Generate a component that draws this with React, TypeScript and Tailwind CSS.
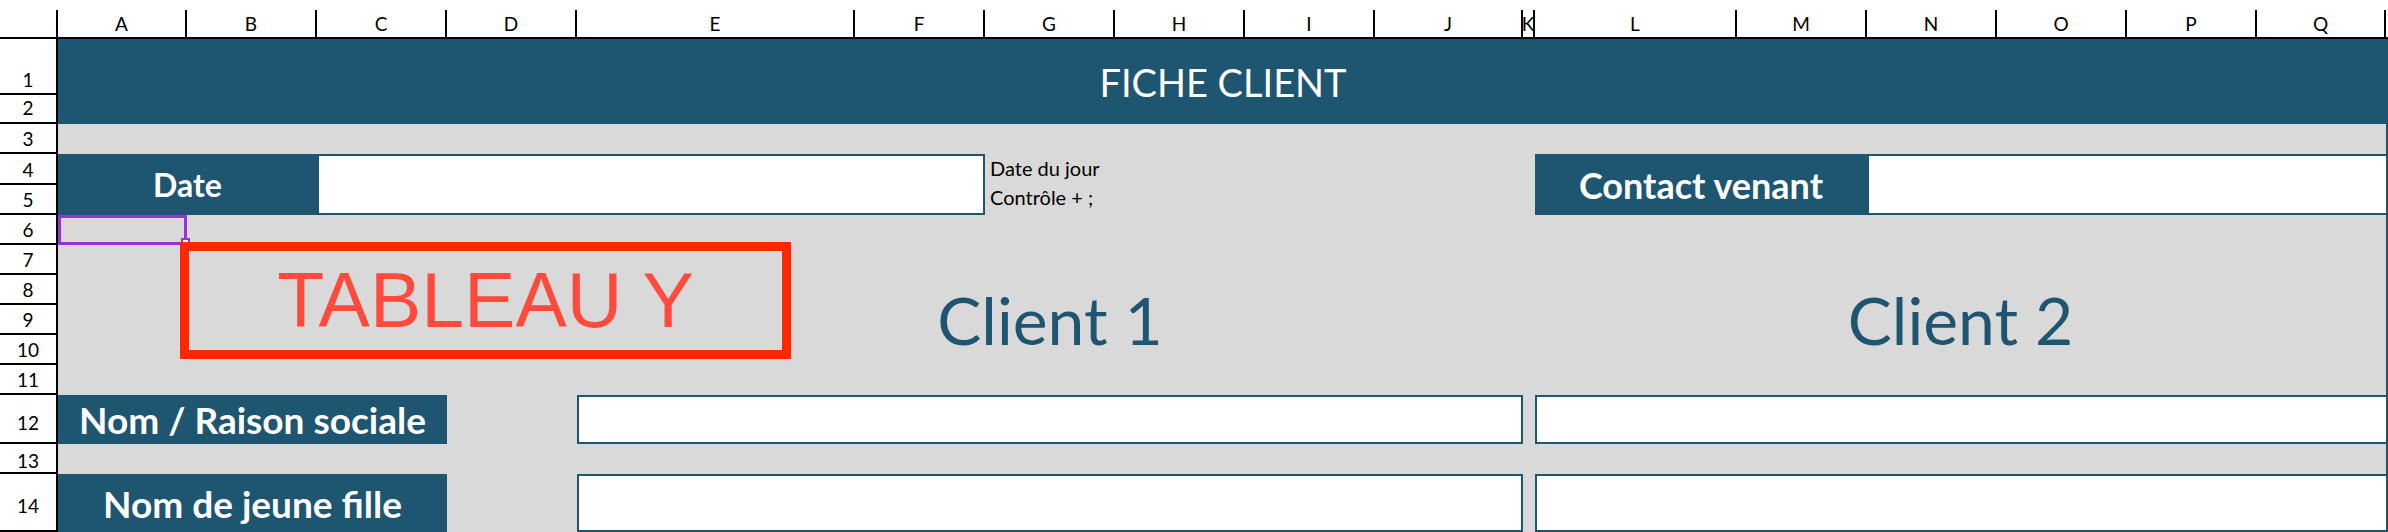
const colHeaders: [string, string][] = [
  ['A', 'col-[2/3]'],
  ['B', 'col-[3/4]'],
  ['C', 'col-[4/5]'],
  ['D', 'col-[5/6]'],
  ['E', 'col-[6/7]'],
  ['F', 'col-[7/8]'],
  ['G', 'col-[8/9]'],
  ['H', 'col-[9/10]'],
  ['I', 'col-[10/11]'],
  ['J', 'col-[11/12]'],
  ['K', 'col-[12/13]'],
  ['L', 'col-[13/14]'],
  ['M', 'col-[14/15]'],
  ['N', 'col-[15/16]'],
  ['O', 'col-[16/17]'],
  ['P', 'col-[17/18]'],
  ['Q', 'col-[18/19]'],
];

const rowLabels: [string, string, string][] = [
  ['1', 'row-[2/3]', 'pb-[4px]'],
  ['2', 'row-[3/4]', 'pb-[5px]'],
  ['3', 'row-[4/5]', 'pb-[4px]'],
  ['4', 'row-[5/6]', 'pb-[4px]'],
  ['5', 'row-[6/7]', 'pb-[4px]'],
  ['6', 'row-[7/8]', 'pb-[4px]'],
  ['7', 'row-[8/9]', 'pb-[4px]'],
  ['8', 'row-[9/10]', 'pb-[4px]'],
  ['9', 'row-[10/11]', 'pb-[4px]'],
  ['10', 'row-[11/12]', 'pb-[4px]'],
  ['11', 'row-[12/13]', 'pb-[4px]'],
  ['12', 'row-[13/14]', 'pb-[10px]'],
  ['13', 'row-[14/15]', 'pb-[2px]'],
  ['14', 'row-[15/16]', 'pb-[15px]'],
];

export default function App() {
  return (
    <div className="w-[2388px] h-[532px] overflow-hidden bg-white font-['Lato',sans-serif]">
      <div className="relative grid grid-cols-[58px_129px_130px_130px_130px_278px_130px_130px_130px_130px_148px_12px_202px_130px_130px_130px_130px_129px_2px] grid-rows-[39px_56px_29px_30px_31px_30px_30px_30px_30px_30px_30px_30px_49px_30px_58px]">
        {/* column header */}
        <div className="col-[1/2] row-[1/2] bg-white pt-[10px] border-b-2 border-black">
          <div className="h-full border-r-2 border-black" />
        </div>
        {colHeaders.map(([l, c]) => (
          <div key={l} className={`${c} row-[1/2] bg-white pt-[10px] border-b-2 border-black`}>
            <div className="h-full border-r-2 border-black flex items-end justify-center pb-[4px] text-[19px] leading-none text-black overflow-hidden">
              {l}
            </div>
          </div>
        ))}
        <div className="col-[19/20] row-[1/2] bg-white border-b-2 border-black" />

        {/* row header */}
        {rowLabels.map(([n, r, pb]) => (
          <div
            key={n}
            className={`col-[1/2] ${r} bg-white border-b-2 border-r-2 border-black flex items-end justify-center ${pb} text-[19px] leading-none text-black`}
          >
            {n}
          </div>
        ))}

        {/* title */}
        <div className="col-[2/20] row-[2/4] bg-[#1e5570] flex items-center justify-center text-white text-[38px] leading-none">
          FICHE CLIENT
        </div>

        {/* body background */}
        <div className="col-[2/19] row-[4/16] bg-[#d9d9d9]" />
        <div className="col-[19/20] row-[4/16] bg-[#1e5570]" />

        {/* Date */}
        <div className="col-[2/4] row-[5/7] bg-[#1e5570] flex items-center justify-center text-white font-bold text-[32px] leading-none">
          Date
        </div>
        <div className="col-[4/8] row-[5/7] bg-white border-2 border-[#1e5570]" />
        <div className="col-[8/11] row-[5/6] flex items-end pl-[5px] pb-[7px] text-[20px] leading-none text-black whitespace-nowrap">
          Date du jour
        </div>
        <div className="col-[8/11] row-[6/7] flex items-end pl-[5px] pb-[8px] text-[20px] leading-none text-black whitespace-nowrap">
          Contrôle + ;
        </div>

        {/* Contact venant */}
        <div className="col-[13/15] row-[5/7] bg-[#1e5570] flex items-center justify-center text-white font-bold text-[36px] leading-none whitespace-nowrap">
          Contact venant
        </div>
        <div className="col-[15/20] row-[5/7] bg-white border-2 border-[#1e5570]" />

        {/* selected cell A6 */}
        <div className="col-[2/3] row-[7/8] border-[3px] border-[#9a30d8] relative">
          <div className="absolute right-[-6px] bottom-[-5px] w-[9px] h-[9px] bg-white border-2 border-[#9a30d8]" />
        </div>

        {/* Client headings */}
        <div className="col-[6/12] row-[8/13] flex items-center justify-center text-[#1e5570] text-[66px] leading-none">
          Client 1
        </div>
        <div className="col-[13/19] row-[8/13] flex items-center justify-center text-[#1e5570] text-[66px] leading-none">
          Client 2
        </div>

        {/* Row 12 */}
        <div className="col-[2/5] row-[13/14] bg-[#1e5570] flex items-center justify-center text-white font-bold text-[37px] leading-none whitespace-nowrap">
          Nom / Raison sociale
        </div>
        <div className="col-[6/12] row-[13/14] bg-white border-2 border-[#1e5570]" />
        <div className="col-[13/20] row-[13/14] bg-white border-2 border-[#1e5570]" />

        {/* Row 14 */}
        <div className="col-[2/5] row-[15/16] bg-[#1e5570] flex items-center justify-center text-white font-bold text-[37px] leading-none whitespace-nowrap">
          Nom de jeune fille
        </div>
        <div className="col-[6/12] row-[15/16] bg-white border-2 border-[#1e5570]" />
        <div className="col-[13/20] row-[15/16] bg-white border-2 border-[#1e5570]" />

        {/* floating shape TABLEAU Y */}
        <div className="absolute left-[180px] top-[242px] w-[611px] h-[117px] border-[9px] border-[#ff2600] flex items-center justify-center font-['Liberation_Sans',sans-serif] text-[77px] leading-none text-[#ff4a3d]">
          TABLEAU Y
        </div>
      </div>
    </div>
  );
}
